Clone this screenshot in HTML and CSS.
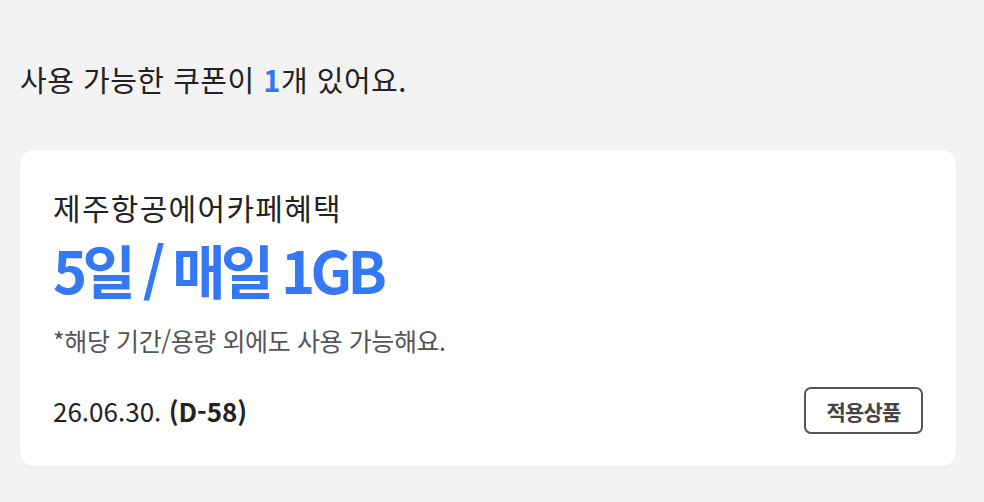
FILE: index.html
```html
<!DOCTYPE html>
<html lang="ko">
<head>
<meta charset="utf-8">
<link rel="stylesheet" href="styles.css">
</head>
<body>
<div class="page">
  <p class="summary">사용 가능한 쿠폰이 <span class="count">1</span>개 있어요.</p>
  <div class="card">
    <div class="title">제주항공에어카페혜택</div>
    <div class="big">5일 / 매일 1GB</div>
    <div class="note">*해당 기간/용량 외에도 사용 가능해요.</div>
    <div class="bottom">
      <div class="date">26.06.30. <b>(D-58)</b></div>
      <button class="btn">적용상품</button>
    </div>
  </div>
</div>
</body>
</html>
```
FILE: styles.css
```css
html, body { margin: 0; padding: 0; }
body {
  background: #f3f3f3;
  font-family: "Noto Sans CJK KR", "Noto Sans", sans-serif;
  color: #222;
  width: 984px;
  height: 502px;
  overflow: hidden;
}
.page { padding: 0 28px 0 20px; }
.summary {
  margin: 0;
  padding-top: 59px;
  font-size: 29px;
  line-height: 40px;
  letter-spacing: 0.5px;
  color: #222;
}
.count { color: #3478f6; font-weight: 700; }
.card {
  margin-top: 51px;
  background: #fff;
  border-radius: 14px;
  box-shadow: 0 1px 4px rgba(0,0,0,0.04);
  padding: 39px 33px 0 33px;
  height: 316px;
  box-sizing: border-box;
}
.title {
  font-size: 30px;
  line-height: 36px;
  letter-spacing: 1.3px;
  color: #222;
}
.big {
  margin-top: 12px;
  font-size: 58px;
  line-height: 64px;
  font-weight: 700;
  letter-spacing: -4.7px;
  color: #3478f6;
}
.note {
  margin-top: 21px;
  font-size: 25px;
  line-height: 36px;
  letter-spacing: -0.4px;
  color: #555;
}
.bottom {
  margin-top: 29px;
  display: flex;
  align-items: center;
  justify-content: space-between;
}
.date {
  font-size: 26px;
  letter-spacing: 0px;
  color: #222;
}
.date b { font-weight: 700; }
.btn {
  font-family: inherit;
  width: 119px;
  height: 47px;
  border: 2px solid #555;
  border-radius: 7px;
  background: #fff;
  font-size: 21px;
  font-weight: 700;
  color: #444;
  letter-spacing: -0.8px;
  padding: 0;
}
```
